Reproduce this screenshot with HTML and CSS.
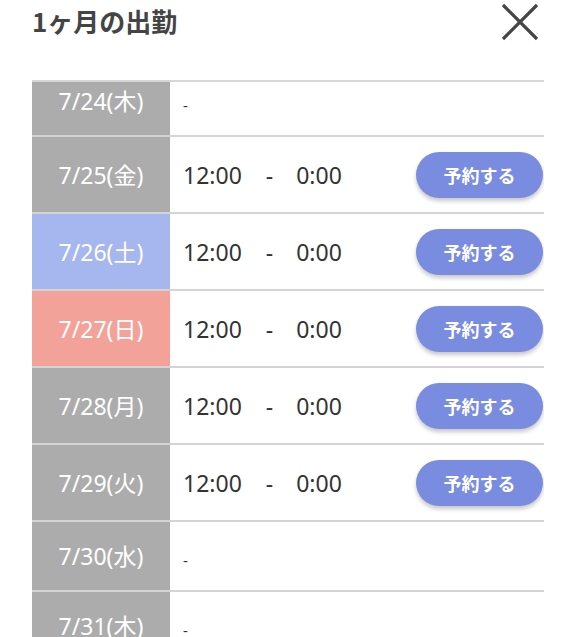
FILE: index.html
```html
<!DOCTYPE html>
<html lang="ja">
<head>
<meta charset="utf-8">
<link rel="stylesheet" href="styles.css">
</head>
<body>
<div class="header">
  <h1 class="title">1ヶ月の出勤</h1>
  <svg class="close" width="38" height="38" viewBox="0 0 38 38"><path d="M2 2 L36 36 M36 2 L2 36" stroke="#454545" stroke-width="3.2" fill="none"/></svg>
</div>
<div class="list">
  <div class="rows">
    <div class="row empty"><div class="date gray">7/24(木)</div><div class="info"><span class="nil">-</span></div></div>
    <div class="row"><div class="date gray">7/25(金)</div><div class="info"><span>12:00</span><span class="sep">-</span><span>0:00</span><button class="btn">予約する</button></div></div>
    <div class="row"><div class="date blue">7/26(土)</div><div class="info"><span>12:00</span><span class="sep">-</span><span>0:00</span><button class="btn">予約する</button></div></div>
    <div class="row"><div class="date red">7/27(日)</div><div class="info"><span>12:00</span><span class="sep">-</span><span>0:00</span><button class="btn">予約する</button></div></div>
    <div class="row"><div class="date gray">7/28(月)</div><div class="info"><span>12:00</span><span class="sep">-</span><span>0:00</span><button class="btn">予約する</button></div></div>
    <div class="row"><div class="date gray">7/29(火)</div><div class="info"><span>12:00</span><span class="sep">-</span><span>0:00</span><button class="btn">予約する</button></div></div>
    <div class="row empty"><div class="date gray">7/30(水)</div><div class="info"><span class="nil">-</span></div></div>
    <div class="row empty"><div class="date gray">7/31(木)</div><div class="info"><span class="nil">-</span></div></div>
  </div>
</div>
</body>
</html>
```

FILE: styles.css
```css
html, body {
  margin: 0;
  padding: 0;
  background: #fff;
  font-family: "Noto Sans", "Noto Sans CJK JP", sans-serif;
  color: #333;
  overflow: hidden;
}
.header {
  display: flex;
  justify-content: space-between;
  align-items: flex-start;
  height: 80px;
  padding: 0 37px 0 32px;
}
.title {
  margin: 4px 0 0;
  font-family: "Noto Sans CJK JP", sans-serif;
  font-size: 26px;
  font-weight: 700;
  color: #444;
  line-height: 34px;
}
.close {
  margin-top: 3px;
}
.list {
  margin: 0 32px;
  border-top: 2px solid #d6d6d6;
  height: 555px;
  overflow: hidden;
}
.rows {
  margin-top: -15px;
}
.row {
  display: grid;
  grid-template-columns: 138px 1fr;
  border-bottom: 2px solid #d4d4d4;
  height: 75px;
}
.row.empty {
  height: 68px;
}
.date {
  display: flex;
  align-items: center;
  justify-content: center;
  color: #fff;
  font-size: 23px;
  padding-bottom: 2px;
}
.gray { background: #acacac; }
.blue { background: #a6b6ef; }
.red { background: #f3a29a; }
.info {
  display: flex;
  align-items: center;
  padding-left: 13px;
  font-size: 23px;
  color: #333;
}
.sep {
  margin: 0 23px 0 24px;
}
.nil {
  font-size: 15px;
  padding-top: 8px;
}
.btn {
  margin-left: auto;
  width: 127px;
  height: 46px;
  border: none;
  border-radius: 23px;
  background: #7a8ce0;
  color: #fff;
  font-family: "Noto Sans CJK JP", sans-serif;
  font-size: 18px;
  font-weight: 700;
  box-shadow: 0 3px 4px rgba(0, 0, 0, 0.22);
  margin-right: 1px;
}
```
